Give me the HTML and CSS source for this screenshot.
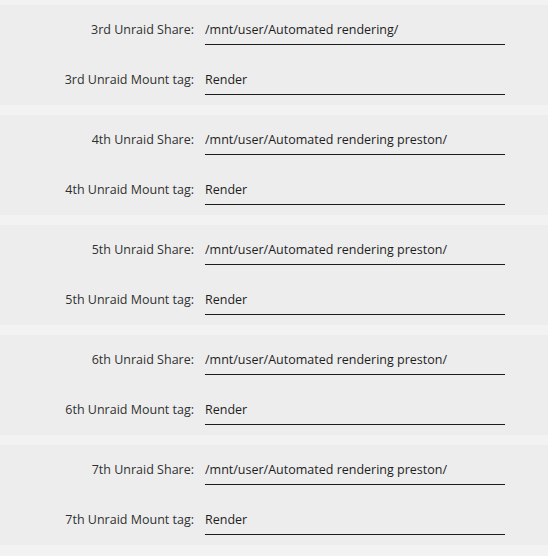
FILE: index.html
```html
<!DOCTYPE html>
<html lang="en">
<head>
    <meta charset="utf-8">
    <link rel="stylesheet" href="styles.css">
</head>
<body>

<!-- share / mount tag pairs -->
<div class="group">
    <dl class="row">
        <dt>3rd Unraid Share:</dt>
        <dd><input type="text" value="/mnt/user/Automated rendering/"></dd>
    </dl>
    <dl class="row">
        <dt>3rd Unraid Mount tag:</dt>
        <dd><input type="text" value="Render"></dd>
    </dl>
</div>

<div class="group">
    <dl class="row">
        <dt>4th Unraid Share:</dt>
        <dd><input type="text" value="/mnt/user/Automated rendering preston/"></dd>
    </dl>
    <dl class="row">
        <dt>4th Unraid Mount tag:</dt>
        <dd><input type="text" value="Render"></dd>
    </dl>
</div>

<div class="group">
    <dl class="row">
        <dt>5th Unraid Share:</dt>
        <dd><input type="text" value="/mnt/user/Automated rendering preston/"></dd>
    </dl>
    <dl class="row">
        <dt>5th Unraid Mount tag:</dt>
        <dd><input type="text" value="Render"></dd>
    </dl>
</div>

<div class="group">
    <dl class="row">
        <dt>6th Unraid Share:</dt>
        <dd><input type="text" value="/mnt/user/Automated rendering preston/"></dd>
    </dl>
    <dl class="row">
        <dt>6th Unraid Mount tag:</dt>
        <dd><input type="text" value="Render"></dd>
    </dl>
</div>

<div class="group">
    <dl class="row">
        <dt>7th Unraid Share:</dt>
        <dd><input type="text" value="/mnt/user/Automated rendering preston/"></dd>
    </dl>
    <dl class="row">
        <dt>7th Unraid Mount tag:</dt>
        <dd><input type="text" value="Render"></dd>
    </dl>
</div>

</body>
</html>
```

FILE: styles.css
```css
* {
    box-sizing: border-box;
}

body {
    margin: 0;
    padding-top: 5px;
    background: #f2f2f2;
    font-family: "Open Sans", sans-serif;
    font-size: 12.5px;
    color: #303030;
}

/* one block per share */
.group {
    background: #ededed;
    margin-bottom: 10px;
}

.row {
    display: flex;
    align-items: flex-end;
    height: 50px;
    margin: 0;
    padding-bottom: 10px;
}

.row dt {
    width: 194px;
    text-align: right;
    line-height: 29px;
    padding-bottom: 1px;
}

.row dd {
    margin: 0 0 0 11px;
}

input {
    width: 300px;
    height: 30px;
    padding: 0 0 1px 0;
    margin: 0;
    border: 0;
    border-bottom: 1px solid #1c1c1c;
    background: transparent;
    font-family: inherit;
    font-size: 12.5px;
    color: #1e1e1e;
    outline: none;
}
```
